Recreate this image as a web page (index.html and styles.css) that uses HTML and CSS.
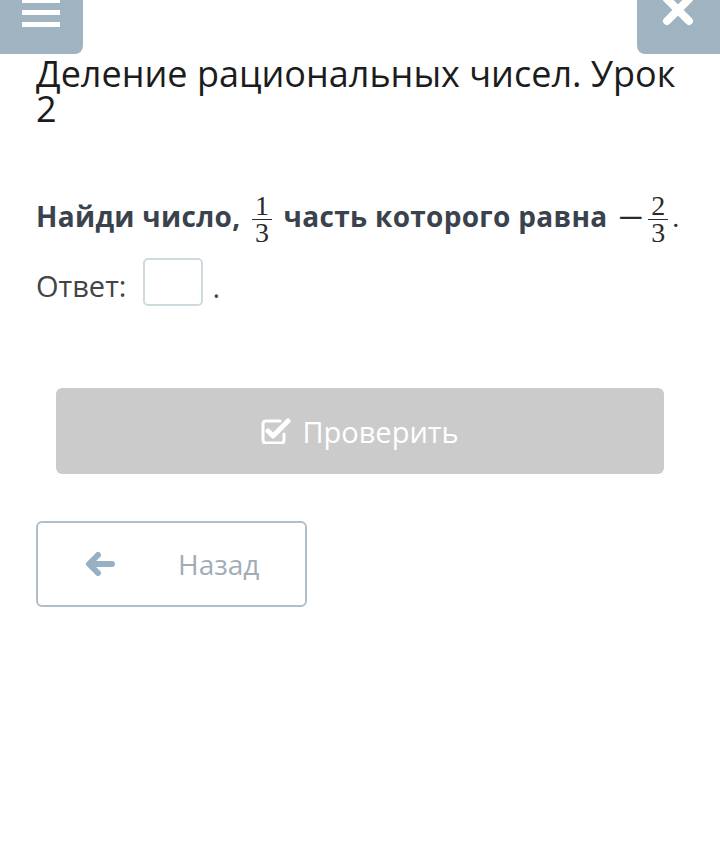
FILE: index.html
```html
<!DOCTYPE html>
<html lang="ru">
<head>
  <meta charset="utf-8" />
  <title>Деление рациональных чисел. Урок 2</title>
  <meta name="viewport" content="width=device-width, initial-scale=1" />
  <link rel="stylesheet" href="styles.css">
</head>
<body>
  <!-- TOP BAR -->
  <header class="topbar">
    <div class="topBtn menuBtn">
      <svg width="38" height="28" viewBox="0 0 38 28">
        <rect x="0" y="-2" width="38" height="5" fill="#fff" />
        <rect x="0" y="10" width="38" height="5" fill="#fff" />
        <rect x="0" y="22" width="38" height="5" fill="#fff" />
      </svg>
    </div>
    <div class="topBtn closeBtn">
      <svg width="32" height="30" viewBox="0 0 32 30">
        <path d="M5 -1 L27 21 M27 -1 L5 21" stroke="#fff" stroke-width="8" stroke-linecap="round" />
      </svg>
    </div>
  </header>

  <main class="page">
    <h1 class="title">Деление рациональных чисел. Урок 2</h1>

    <p class="question">
      Найди число,
      <span class="frac"><span class="num">1</span><span class="den">3</span></span>
      часть которого равна
      <span class="minus">−</span><span class="frac"><span class="num">2</span><span class="den">3</span></span><span class="dot">.</span>
    </p>

    <div class="answer">
      <span class="answerLabel">Ответ:</span>
      <input class="answerBox" type="text" />
      <span class="answerDot">.</span>
    </div>

    <button class="checkBtn">
      <svg width="30" height="26" viewBox="0 0 30 26">
        <path d="M19 3 H5 Q2 3 2 6 V22 Q2 25 5 25 H20 Q23 25 23 22 V16" fill="none" stroke="#fff" stroke-width="3" stroke-linecap="round" />
        <path d="M7 13 L12 18 L27 3" fill="none" stroke="#fff" stroke-width="5" stroke-linecap="round" stroke-linejoin="round" />
      </svg>
      <span>Проверить</span>
    </button>

    <button class="backBtn">
      <svg width="30" height="24" viewBox="0 0 30 24">
        <path d="M27 12 H5 M13 3 L4 12 L13 21" fill="none" stroke="#98b0c3" stroke-width="6" stroke-linecap="round" stroke-linejoin="round" />
      </svg>
      <span>Назад</span>
    </button>
  </main>
</body>
</html>
```

FILE: styles.css
```css
/* ========== GLOBAL ========== */
* {
  box-sizing: border-box;
  margin: 0;
  padding: 0;
}
body {
  width: 720px;
  height: 842px;
  background: #fff;
  font-family: "Open Sans", sans-serif;
  color: #222;
  overflow: hidden;
}

/* ========== TOP BAR ========== */
.topbar {
  display: flex;
  justify-content: space-between;
  height: 54px;
}
.topBtn {
  width: 83px;
  height: 54px;
  background: #a0b3c1;
  display: flex;
  align-items: flex-start;
}
.menuBtn {
  border-bottom-right-radius: 8px;
  padding-left: 22px;
}
.closeBtn {
  border-bottom-left-radius: 8px;
  padding-left: 25px;
}

/* ========== CONTENT ========== */
.page {
  padding: 0 36px;
  display: flex;
  flex-direction: column;
  align-items: flex-start;
}
.title {
  margin-top: 2px;
  font-size: 36px;
  font-weight: 400;
  line-height: 35px;
  color: #1c1c1c;
}

.question {
  margin-top: 64px;
  font-size: 28px;
  font-weight: 700;
  line-height: 52px;
  color: #3a434d;
  letter-spacing: 0.3px;
  white-space: nowrap;
}
.frac {
  display: inline-flex;
  flex-direction: column;
  align-items: center;
  vertical-align: 12px;
  margin: 0 4px;
  font-family: "Liberation Serif", serif;
  font-weight: 400;
  font-size: 28px;
  line-height: 26px;
  letter-spacing: 0;
  color: #2a2a2a;
}
.frac .num {
  padding: 0 3px;
  border-bottom: 1px solid #2a2a2a;
}
.minus {
  font-family: "Liberation Serif", serif;
  font-weight: 400;
  font-size: 46px;
  line-height: 0;
  vertical-align: -6px;
  color: #2a2a2a;
  margin: 0 0 0 3px;
}
.dot {
  font-family: "Liberation Serif", serif;
  font-weight: 400;
  color: #2a2a2a;
}

.answer {
  margin-top: 12px;
  display: flex;
  align-items: center;
  font-size: 29px;
  color: #444;
}
.answerLabel {
  margin-top: 7px;
}
.answerBox {
  width: 60px;
  height: 48px;
  margin-left: 17px;
  border: 2px solid #cddbdf;
  border-radius: 5px;
  outline: none;
}
.answerDot {
  margin-left: 9px;
  margin-top: 8px;
}

.checkBtn {
  margin: 82px 20px 0 20px;
  align-self: stretch;
  height: 86px;
  border: none;
  border-radius: 6px;
  background: #cbcbcb;
  color: #fff;
  font-family: "Open Sans", sans-serif;
  font-size: 29px;
  display: flex;
  align-items: center;
  justify-content: center;
  gap: 11px;
}

.backBtn {
  margin-top: 47px;
  width: 271px;
  height: 86px;
  background: #fff;
  border: 2px solid #b0bfc9;
  border-radius: 6px;
  color: #9fadb7;
  font-family: "Open Sans", sans-serif;
  font-size: 28px;
  display: flex;
  align-items: center;
  padding-left: 47px;
  gap: 63px;
}
```
